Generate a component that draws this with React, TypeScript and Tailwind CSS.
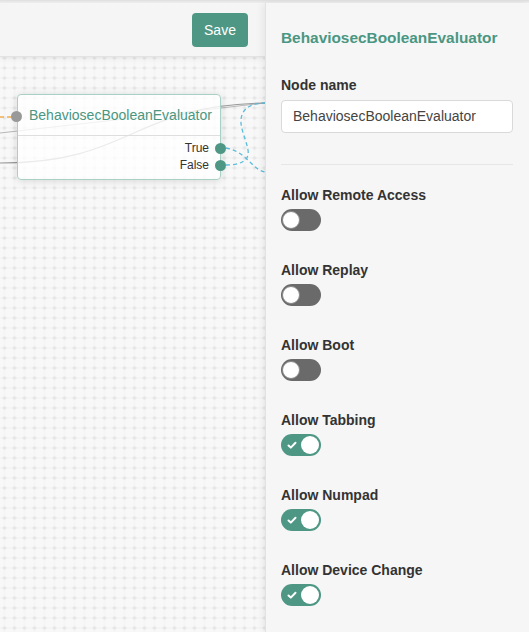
const teal = "#4e9785";

type ToggleItem = { label: string; on: boolean };

const toggles: ToggleItem[] = [
  { label: "Allow Remote Access", on: false },
  { label: "Allow Replay", on: false },
  { label: "Allow Boot", on: false },
  { label: "Allow Tabbing", on: true },
  { label: "Allow Numpad", on: true },
  { label: "Allow Device Change", on: true },
];

const Toggle = ({ on }: { on: boolean }) => (
  <div
    className={
      on
        ? "relative h-[22px] w-[40px] rounded-full bg-[#4e9785]"
        : "relative h-[22px] w-[40px] rounded-full bg-[#6a6a6a]"
    }
  >
    {on && (
      <svg className="absolute left-0 top-0" width="22" height="22" viewBox="0 0 22 22">
        <path d="M7.5 11.5 L9.8 13.6 L14.5 8.8" fill="none" stroke="white" strokeWidth="2" strokeLinecap="round" strokeLinejoin="round" />
      </svg>
    )}
    <div
      className={
        on
          ? "absolute right-[2px] top-[2px] h-[18px] w-[18px] rounded-full bg-white"
          : "absolute left-[1px] top-[2px] h-[18px] w-[18px] rounded-full border border-[#888] bg-white"
      }
    />
  </div>
);

const Canvas = () => (
  <div className="relative flex-1 overflow-hidden bg-[#f8f8f8]">
    <svg className="absolute inset-0" width="100%" height="100%">
      <defs>
        <pattern id="grid" x="-0.5" y="-4" width="10" height="10" patternUnits="userSpaceOnUse">
          <path d="M5 0V10M0 5H10" stroke="#f1f1f1" strokeWidth="1" />
          <path d="M5 3V7M3 5H7" stroke="#e1e1e1" strokeWidth="1" />
        </pattern>
      </defs>
      <rect width="100%" height="100%" fill="url(#grid)" />
    </svg>

    {/* edges */}
    <svg className="absolute inset-0" width="100%" height="100%">
      <path d="M0 76 L265 46" fill="none" stroke="#b8b8b8" strokeWidth="1.2" />
      <path d="M0 106 C132 106 132 48 265 46" fill="none" stroke="#9a9a9a" strokeWidth="1.2" />
      <path d="M0 60 L12 60" fill="none" stroke="#f0ad4e" strokeWidth="1.3" strokeDasharray="4 3" />
      <path d="M226 91 C238 93 246 101 252 107 C256 111 260 114 265 115" fill="none" stroke="#5bbcdc" strokeWidth="1.3" strokeDasharray="4 3" />
      <path d="M226 108 C238 108 250 105 248 93 C246 81 238 68 242 58 C245 49 255 46 265 46" fill="none" stroke="#5bbcdc" strokeWidth="1.3" strokeDasharray="4 3" />
    </svg>

    {/* node */}
    <div className="absolute left-[17px] top-[37px] h-[86px] w-[204px] rounded-[4px] border border-[#a9d0c5] bg-white/80 shadow-[0_1px_8px_rgba(0,0,0,0.13)]">
      <div className="relative flex h-[41px] items-center border-b border-[#dedede] pl-[11px]">
        <div className="absolute left-[-7px] top-[16px] h-[11px] w-[11px] rounded-full bg-[#999]" />
        <span className="text-[14px] text-[#4a9682]">BehaviosecBooleanEvaluator</span>
      </div>
      <div className="flex flex-col items-end pt-[4px]">
        {["True", "False"].map(p => (
          <div key={p} className="relative w-full pr-[11px] text-right text-[12px] leading-[17px] text-[#333]">
            {p}
            <div className="absolute right-[-6px] top-[3px] h-[11px] w-[11px] rounded-full bg-[#4e9785]" />
          </div>
        ))}
      </div>
    </div>
  </div>
);

const Panel = () => (
  <div className="relative z-20 flex w-[264px] flex-col border-l border-[#e2e2e2] bg-[#f6f6f6] pl-[15px] pr-[16px] pt-[25px] shadow-[-2px_0_8px_rgba(0,0,0,0.07)]">
    <h1 className="text-[15.4px] font-bold leading-[20px] text-[#4a9682]">BehaviosecBooleanEvaluator</h1>
    <label className="mt-[27px] text-[14px] font-bold leading-[20px] text-[#333]">Node name</label>
    <div className="mt-[5px] flex h-[33px] items-center rounded-[4px] border border-[#d9d9d9] bg-white px-[11px] text-[14px] text-[#444]">
      BehaviosecBooleanEvaluator
    </div>
    <div className="mt-[31px] h-px bg-[#e6e6e6]" />
    <div className="mt-[20px] flex flex-col gap-[29px]">
      {toggles.map(t => (
        <div key={t.label} className="flex flex-col gap-[4px]">
          <span className="text-[14px] font-bold leading-[20px] text-[#333]">{t.label}</span>
          <Toggle on={t.on} />
        </div>
      ))}
    </div>
  </div>
);

export default function App() {
  return (
    <div className="flex h-[632px] w-[529px] flex-col overflow-hidden bg-[#f6f6f6] font-['Liberation_Sans',Arial,sans-serif]">
      <div className="h-[3px] shrink-0 bg-gradient-to-b from-[#e0e0e0] to-[#f1f1f1]" />
      <div className="flex min-h-0 flex-1">
        <div className="flex w-[265px] flex-col">
          <div className="relative z-10 flex h-[54px] shrink-0 items-start justify-end border-b border-[#e3e3e3] bg-[#f5f5f5] pr-[17px] pt-[10px] shadow-[0_2px_6px_rgba(0,0,0,0.06)]">
            <button className="h-[34px] w-[56px] rounded-[4px] text-[14px] text-white" style={{ background: teal }}>
              Save
            </button>
          </div>
          <Canvas />
        </div>
        <Panel />
      </div>
    </div>
  );
}
